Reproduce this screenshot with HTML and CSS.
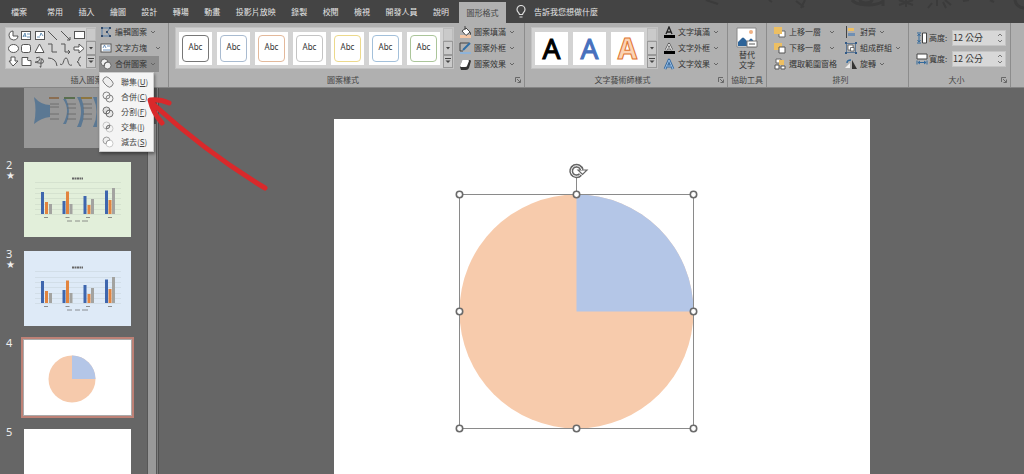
FILE: index.html
```html
<!DOCTYPE html>
<html lang="zh-Hant">
<head>
<meta charset="utf-8">
<title>圖形格式</title>
<link rel="stylesheet" href="styles.css">
</head>
<body>
<svg class="defs" aria-hidden="true">
  <symbol id="caret" viewBox="0 0 6 4"><path d="M1 1l2 2 2-2" fill="none" stroke="#666"/></symbol>
  <symbol id="more" viewBox="0 0 8 8"><path d="M1 1.500h6" stroke="#444" fill="none"/><path d="M1.500 3.500h5L4 6z" fill="#444"/></symbol>
  <symbol id="tri" viewBox="0 0 8 8"><path d="M2 3h4L4 5.500z" fill="#444"/></symbol>
  <symbol id="launch" viewBox="0 0 6 6"><path d="M.5 5V.5H5M2 2l3 3M5.500 2.500v3h-3" fill="none" stroke="#555" stroke-width=".8"/></symbol>
  <symbol id="chart" viewBox="0 0 107 75">
    <path d="M11 20.500h86M11 26.500h86M11 31.500h86M11 36.500h86M11 42.500h86M11 47.500h86M11 52.500h86" stroke="#8a9a94" stroke-opacity=".25" stroke-width=".6"/>
    <path d="M48 16.500h11" stroke="#666" stroke-width="1.800" stroke-dasharray="2 .5"/>
    <path d="M17 30h3v22h-3zM38.500 39h3v13h-3zM59.500 34h3v18h-3zM81 28.500h3v23.500h-3z" fill="#3e66ae"/>
    <path d="M21 40h3v12h-3zM42 29.500h3v22.500h-3zM63.500 43h3v9h-3zM84.500 38h3v14h-3z" fill="#e2843f"/>
    <path d="M25 42h3v10h-3zM45.500 42h3v10h-3zM67 37h3v15h-3zM88 26h3v26h-3z" fill="#a3a3a0"/>
    <path d="M20 55.500h4M41.500 55.500h4M62 55.500h4M84 55.500h4M43 59h5M51 59h5M58 59h6" stroke="#666" stroke-opacity=".7"/>
  </symbol>
</svg>

<header class="tabbar">
  <button class="tab file">檔案</button>
  <nav class="tabs">
    <button class="tab">常用</button><button class="tab">插入</button><button class="tab">繪圖</button><button class="tab">設計</button><button class="tab">轉場</button><button class="tab">動畫</button><button class="tab">投影片放映</button><button class="tab">錄製</button><button class="tab">校閱</button><button class="tab">檢視</button><button class="tab">開發人員</button><button class="tab">說明</button>
  </nav>
  <button class="tab active">圖形格式</button>
  <button class="tab tell">
    <svg class="bulb" viewBox="0 0 10 14"><path d="M3.500 9.500C3 7.500 1 7 1 4.500a4 4 0 0 1 8 0C9 7 7 7.500 6.500 9.500zM3.500 12h3" fill="none" stroke="#ddd" stroke-width="1.200"/></svg>
    告訴我您想做什麼
  </button>
  <svg class="doodles" viewBox="0 0 384 23" aria-hidden="true">
    <g fill="none" stroke="#3b3b3b" stroke-width="2">
      <path d="M66 0l12 4M129 0l3 2M156 1l8 6M165 0l-4 8M259 0l14 5M273 0l-14 5M266 0v7M288 8l4-5M297 6V0M306 8l-3-6M311 5l-6-5M323 1l6-1M350 0l4 2"/>
      <path d="M212 0a17 7 0 0 0 30 2M220 0a6 3 0 0 0 12 0M243 0v6M375 0a9 9 0 0 0 9 8" stroke-width="3"/>
    </g>
  </svg>
</header>

<div class="ribbon">
  <section class="group g-insert">
    <div class="body">
      <div class="gallery shapes">
        <svg class="shape-grid" viewBox="0 0 80 40" role="img" aria-label="圖案">
          <g fill="#fff" stroke="#555">
            <path d="M7 3a4.500 4.500 0 1 0 5 5H7z"/><rect x="15.500" y="3.500" width="9" height="8"/><rect x="29.500" y="3.500" width="9" height="8"/><rect x="68.500" y="3.500" width="10" height="7"/>
            <ellipse cx="7.500" cy="20.500" rx="5" ry="4"/><rect x="15.500" y="16.500" width="9" height="8" rx="2"/><path d="M33.500 16l4.500 8.500h-9zM68 19h5v-3l5 4.500-5 4.500v-3h-5zM5 29h4v4h3l-5 5-4-5h2zM16 37.500v-8h6q-2 4 3 3v5z"/>
          </g>
          <g fill="none" stroke="#555">
            <path d="M42 3l9 9M55 3l9 9m0-3v3h-3M42 16h4v8h5M55 16h4v8h5m-2-2l2 2-2 2M30 30q5-2 4 1t-4 3 3 1 4-3-2 3-1 3M42 30q8 0 9 8M54 36c4 3 3-6 6-6s1 9 6 7M75 29q-2 0-2 2t-2 3q2 0 2 2t2 2"/>
          </g>
          <path d="M17 9l2-4 1 4M17 8h3M21 6h3M21 9h3M31 9h3M34 8l1-3 2 3" stroke="#477aa5" fill="none" stroke-width=".8"/>
        </svg>
        <div class="scroller"><button aria-label="上"></button><button aria-label="下"><svg><use href="#tri"/></svg></button><button aria-label="更多"><svg><use href="#more"/></svg></button></div>
      </div>
      <div class="cmds">
        <button class="cmd"><svg class="ico" viewBox="0 0 12 12"><path d="M2 2h8L7 6l3 4H2z" fill="none" stroke="#577fa8"/><path d="M1 1h2v2H1zM9 1h2v2H9zM1 9h2v2H1zM9 9h2v2H9zM6 5h2v2H6z" fill="#344b6b"/></svg>編輯圖案<svg class="caret"><use href="#caret"/></svg></button>
        <button class="cmd wide"><svg class="ico" viewBox="0 0 12 12"><rect x="1" y="2" width="10" height="8" fill="#fff" stroke="#555"/><path d="M3 6l1.500-3L6 6M7 4h3M3 8h7" stroke="#4a77a8" fill="none" stroke-width=".8"/></svg>文字方塊<svg class="caret"><use href="#caret"/></svg></button>
        <div class="merge">
          <button class="cmd pressed" aria-expanded="true"><svg class="ico" viewBox="0 0 12 12"><g fill="#eee" stroke="#555" stroke-width=".8"><circle cx="4.500" cy="4.500" r="3.500"/><circle cx="7.500" cy="7.500" r="3.500"/><path d="M4.500 8a3.500 3.500 0 0 1 3.500-4" fill="none"/></g></svg>合併圖案<svg class="caret"><use href="#caret"/></svg></button>
          <div class="menu" role="menu">
            <button class="item" role="menuitem"><svg class="ico" viewBox="0 0 12 12"><path d="M2 7a3.500 3.500 0 1 1 5-5l3 3a3.500 3.500 0 1 1-5 5z" fill="#eee" stroke="#666" stroke-width=".8"/></svg><span>聯集(<u>U</u>)</span></button>
            <button class="item" role="menuitem"><svg class="ico" viewBox="0 0 12 12"><g fill="none" stroke="#666" stroke-width=".8"><circle cx="4.500" cy="4.500" r="3.500"/><circle cx="7.500" cy="7.500" r="3.500"/></g></svg><span>合併(<u>C</u>)</span></button>
            <button class="item" role="menuitem"><svg class="ico" viewBox="0 0 12 12"><g fill="#ddd" stroke="#555" stroke-width=".8"><circle cx="4.500" cy="4.500" r="3.500"/><circle cx="7.500" cy="7.500" r="3.500" fill-opacity=".5"/><path d="M4 8q0-4 4-4-0 4-4 4z" fill="#fff"/></g></svg><span>分割(<u>F</u>)</span></button>
            <button class="item" role="menuitem"><svg class="ico" viewBox="0 0 12 12"><g fill="none" stroke="#bbb" stroke-width=".8"><circle cx="4.500" cy="4.500" r="3.500"/><circle cx="7.500" cy="7.500" r="3.500"/></g><path d="M4 8q0-4 4-4 0 4-4 4z" fill="#ddd" stroke="#666" stroke-width=".8"/></svg><span>交集(<u>I</u>)</span></button>
            <button class="item" role="menuitem"><svg class="ico" viewBox="0 0 12 12"><circle cx="7.500" cy="7.500" r="3.500" fill="#fff" stroke="#bbb" stroke-width=".8"/><path d="M8 4a3.500 3.500 0 1 0-4 4q0-4 4-4z" fill="#eee" stroke="#888" stroke-width=".8"/></svg><span>減去(<u>S</u>)</span></button>
          </div>
        </div>
      </div>
    </div>
    <div class="caption"><span>插入圖案</span></div>
  </section>

  <section class="group g-style">
    <div class="body">
      <div class="gallery">
        <div class="cards">
          <button class="card"><span class="abc k">Abc</span></button><button class="card"><span class="abc b">Abc</span></button><button class="card"><span class="abc o">Abc</span></button><button class="card"><span class="abc g">Abc</span></button><button class="card"><span class="abc y">Abc</span></button><button class="card"><span class="abc c">Abc</span></button><button class="card"><span class="abc n">Abc</span></button>
        </div>
        <div class="scroller"><button aria-label="上"></button><button aria-label="下"><svg><use href="#tri"/></svg></button><button aria-label="更多"><svg><use href="#more"/></svg></button></div>
      </div>
      <div class="cmds">
        <button class="cmd"><svg class="ico" viewBox="0 0 12 12"><path d="M1 9h11v3H1z" fill="#f3c6a5"/><path d="M3 5l4-3 4 4-4 3.500z" fill="#fff" stroke="#444"/><path d="M6 4V0M11 6l1 3" stroke="#444"/></svg>圖案填滿<svg class="caret"><use href="#caret"/></svg></button>
        <button class="cmd"><svg class="ico" viewBox="0 0 12 12"><path d="M10 1H1v8h3" fill="none" stroke="#444"/><path d="M4 8l7-7" stroke="#2f6ea5" stroke-width="2"/><path d="M1 11h11" stroke="#8fb3d8" stroke-width="2"/></svg>圖案外框<svg class="caret"><use href="#caret"/></svg></button>
        <button class="cmd"><svg class="ico" viewBox="0 0 12 12"><path d="M1 9l2-6q1-1 2-1h5q2 0 2 1l-2 7q-1 2-3 2H2z" fill="#333"/><path d="M1 8l2-5q0-1 1-1h5q1 0 1 1L8 8q0 1-2 1H2z" fill="#fff"/></svg>圖案效果<svg class="caret"><use href="#caret"/></svg></button>
      </div>
    </div>
    <div class="caption"><span>圖案樣式</span><button class="launch" aria-label="設定圖案格式"><svg><use href="#launch"/></svg></button></div>
  </section>

  <section class="group g-art">
    <div class="body">
      <div class="gallery">
        <div class="cards">
          <button class="card wa wa-black">A</button><button class="card wa wa-blue">A</button><button class="card wa wa-orange">A</button>
        </div>
        <div class="scroller"><button aria-label="上"></button><button aria-label="下"><svg><use href="#tri"/></svg></button><button aria-label="更多"><svg><use href="#more"/></svg></button></div>
      </div>
      <div class="cmds">
        <button class="cmd"><svg class="ico" viewBox="0 0 12 12"><path d="M3 8l3-7 3 7M4 6h4" fill="none" stroke="#222" stroke-width="1.300"/><path d="M1 9h11v3H1z" fill="#000"/></svg>文字填滿<svg class="caret"><use href="#caret"/></svg></button>
        <button class="cmd"><svg class="ico" viewBox="0 0 12 12"><path d="M3 8l3-6 3 6M4 6h4" fill="none" stroke="#555" stroke-width="2.400" stroke-linejoin="round"/><path d="M3 8l3-6 3 6M4 6h4" fill="none" stroke="#eee"/><path d="M1 9h11v3H1z" fill="#000"/></svg>文字外框<svg class="caret"><use href="#caret"/></svg></button>
        <button class="cmd"><svg class="ico" viewBox="0 0 12 12"><path d="M2 11l4-9 4 9M4 8h4" fill="none" stroke="#35699f" stroke-width="2.800" stroke-linejoin="round"/><path d="M2 11l4-9 4 9M4 8h4" fill="none" stroke="#9cc1e6"/></svg>文字效果<svg class="caret"><use href="#caret"/></svg></button>
      </div>
    </div>
    <div class="caption"><span>文字藝術師樣式</span><button class="launch" aria-label="設定文字效果格式"><svg><use href="#launch"/></svg></button></div>
  </section>

  <section class="group g-alt">
    <div class="body">
      <button class="big"><svg class="pic" viewBox="0 0 22 22"><path d="M1 1h19v19H1z" fill="#fff" stroke="#888"/><path d="M2 19v-4l4-4q1-1 2 0l4 4 2-3q1-1 2 0l3 4v3z" fill="#2e6499"/><circle cx="15" cy="5" r="2" fill="#efb184"/><path d="M11 14h10v6H11z" fill="#fff" stroke="#777"/><path d="M13 17h6" stroke="#555"/></svg><span>替代<br>文字</span></button>
    </div>
    <div class="caption"><span>協助工具</span></div>
  </section>

  <section class="group g-arrange">
    <div class="body">
      <div class="cmds">
        <button class="cmd wide"><svg class="ico" viewBox="0 0 12 12"><path d="M5 5h6v6H5z" fill="#fff" stroke="#666"/><path d="M0 1h8v7H0z" fill="#edbf62"/></svg>上移一層<svg class="caret"><use href="#caret"/></svg></button>
        <button class="cmd wide"><svg class="ico" viewBox="0 0 12 12"><path d="M0 1h8v7H0z" fill="#edbf62"/><path d="M5 5h6v6H5z" fill="#fff" stroke="#555"/></svg>下移一層<svg class="caret"><use href="#caret"/></svg></button>
        <button class="cmd"><svg class="ico" viewBox="0 0 12 12"><path d="M2 1h5v4H2z" fill="#fff" stroke="#666"/><path d="M5 2h5v5H5z" fill="#edbf62"/><path d="M1 7h4v4H1zM7 8h4v3H7z" fill="#fff" stroke="#555"/></svg>選取範圍窗格</button>
      </div>
      <div class="cmds">
        <button class="cmd"><svg class="ico" viewBox="0 0 12 12"><path d="M1.500 0v12" stroke="#444"/><path d="M3 2h6v3H3z" fill="#edbf62"/><path d="M3 7h7v3H3z" fill="#6f8fb3"/></svg>對齊<svg class="caret"><use href="#caret"/></svg></button>
        <button class="cmd"><svg class="ico" viewBox="0 0 12 12"><path d="M1.500 1.500h9v9h-9z" fill="none" stroke="#5d7896"/><path d="M3 3h5v5H3z" fill="#fff" stroke="#555" stroke-width=".8"/><path d="M5.500 5.500H9V9H5.500z" fill="#fff" stroke="#555" stroke-width=".8"/><path d="M0 0h2v2H0zM10 0h2v2h-2zM0 10h2v2H0zM10 10h2v2h-2z" fill="#335a85"/></svg>組成群組<svg class="caret"><use href="#caret"/></svg></button>
        <button class="cmd"><svg class="ico" viewBox="0 0 12 12"><path d="M7 2v9h5z" fill="#333"/><path d="M5 10H0l5-5z" fill="#eee"/><path d="M2 5q0-3 4-3" fill="none" stroke="#336a9d" stroke-width="1.500"/></svg>旋轉<svg class="caret"><use href="#caret"/></svg></button>
      </div>
    </div>
    <div class="caption"><span>排列</span></div>
  </section>

  <section class="group g-size">
    <div class="body">
      <div class="fields">
        <div class="field"><svg class="ico" viewBox="0 0 12 12"><path d="M6.500 1h4v10h-4z" fill="#fff" stroke="#444"/><path d="M1 1h4M1 11h4M3 2v8M1.500 4L3 2l1.500 2M1.500 8L3 10l1.500-2" fill="none" stroke="#336a9d"/></svg><label for="h">高度:</label><span class="spin"><input id="h" type="text" value="12 公分"><svg viewBox="0 0 6 12"><path d="M1 4l2-2 2 2M1 8l2 2 2-2" fill="none" stroke="#777"/></svg></span></div>
        <div class="field"><svg class="ico" viewBox="0 0 12 12"><path d="M1 1h10v5H1z" fill="#fff" stroke="#444"/><path d="M1 7.500v4M11 7.500v4M2 9.500h8M4 8L2 9.500 4 11M8 8l2 1.500L8 11" fill="none" stroke="#336a9d"/></svg><label for="w">寬度:</label><span class="spin"><input id="w" type="text" value="12 公分"><svg viewBox="0 0 6 12"><path d="M1 4l2-2 2 2M1 8l2 2 2-2" fill="none" stroke="#777"/></svg></span></div>
      </div>
    </div>
    <div class="caption"><span>大小</span><button class="launch" aria-label="大小及位置"><svg><use href="#launch"/></svg></button></div>
  </section>
</div>

<main class="work">
  <aside class="rail">
    <ol class="slides">
      <li class="slide"><div class="num"></div><div class="thumb dim"><svg viewBox="0 0 107 75">
        <path d="M10 24q7 8 16 8v12q-9 1-16 7 3-14 0-27zM39 26q8 11 0 25h3q6-13 0-25zM53 24q8 14 0 30h4q6-15 0-30zM69 24q7 15 0 30h4V24z" fill="#5b7893"/>
        <path d="M25 25h10" stroke="#8b6e52" stroke-width="2"/><path d="M40 25h11" stroke="#596e4e" stroke-width="2"/><path d="M57 25h11" stroke="#8d7640" stroke-width="2"/>
        <path d="M26 31h9M26 34h9M26 41h9M26 46h9M43 31h9M43 35h9M43 41h9M43 46h9M59 31h9M59 35h9M59 41h9M59 46h9" stroke="#666" stroke-width=".8"/></svg></div></li>
      <li class="slide"><div class="num">2<span class="star">★</span></div><div class="thumb green"><svg viewBox="0 0 107 75"><use href="#chart"/></svg></div></li>
      <li class="slide"><div class="num">3<span class="star">★</span></div><div class="thumb blue"><svg viewBox="0 0 107 75"><use href="#chart"/></svg></div></li>
      <li class="slide"><div class="num">4</div><div class="thumb selected"><svg viewBox="0 0 107 75"><circle cx="48" cy="39" r="23.500" fill="#f6caac"/><path d="M48 39V15.500A23.500 23.500 0 0 1 71.500 39z" fill="#b4c6e7"/></svg></div></li>
      <li class="slide"><div class="num">5</div><div class="thumb"><svg viewBox="0 0 107 75"></svg></div></li>
    </ol>
    <div class="track"><div class="grip"></div></div>
  </aside>
  <section class="canvas">
    <svg class="page" viewBox="0 0 536 372" role="img" aria-label="圓餅">
      <circle cx="242.500" cy="192.500" r="117" fill="#f7cbac"/>
      <path d="M242.500 192.500v-117a117 117 0 0 1 117 117z" fill="#b4c6e7"/>
      <path d="M125.500 75.500h234v234h-234zM242.500 75.500V58" fill="none" stroke="#8a8a8a"/>
      <g fill="#fff" stroke="#6a6a6a" stroke-width="1.600">
        <circle cx="125.500" cy="75.500" r="3.200"/><circle cx="242.500" cy="75.500" r="3.200"/><circle cx="359.500" cy="75.500" r="3.200"/>
        <circle cx="125.500" cy="192.500" r="3.200"/><circle cx="359.500" cy="192.500" r="3.200"/>
        <circle cx="125.500" cy="309.500" r="3.200"/><circle cx="242.500" cy="309.500" r="3.200"/><circle cx="359.500" cy="309.500" r="3.200"/>
      </g>
      <path d="M246.500 55.500a5.300 5.300 0 1 1 1.200-4.500" fill="none" stroke="#666" stroke-width="4"/>
      <path d="M244 51h9l-4.500 4.500z" fill="#fff" stroke="#666" stroke-width="1.200"/>
      <path d="M246.500 55.500a5.300 5.300 0 1 1 1.200-4.500" fill="none" stroke="#fff" stroke-width="1"/>
    </svg>
  </section>
</main>

<svg class="arrow" viewBox="0 0 124 98" aria-hidden="true"><path d="M118 92Q60 57 6 8M22 7Q13 3 3 4q3 13 12 23" fill="none" stroke="#d9292b" stroke-width="5" stroke-linecap="round" stroke-linejoin="round"/></svg>
</body>
</html>
```
FILE: styles.css
```css
* { box-sizing: border-box; }
body {
  margin: 0;
  height: 100vh;
  display: flex;
  flex-direction: column;
  overflow: hidden;
  position: relative;
  background: #666;
  color: #333;
  font: 8px/10px "Noto Sans CJK TC", "Noto Sans", sans-serif;
}
button, input { font: inherit; color: inherit; border: 0; padding: 0; margin: 0; background: none; }
button { white-space: nowrap; }
svg { display: block; flex: none; }
.defs { position: absolute; width: 0; height: 0; }

.tabbar { display: flex; height: 23px; flex: none; background: #444; color: #e6e6e6; padding-left: 11px; }
.tab { flex: none; }
.tabs { display: flex; justify-content: space-between; width: 402px; margin: 0 10px 0 20px; }
.active { background: #b0b0b0; color: #444; width: 47px; margin-top: 2px; }
.tell { display: flex; align-items: center; gap: 8px; padding-left: 10px; }
.bulb { width: 10px; height: 14px; }
.doodles { width: 384px; height: 23px; margin-left: auto; }

.ribbon { display: flex; flex: none; background: #b0b0b0; border-bottom: 1px solid #858585; }
.group { display: flex; flex-direction: column; padding-top: 1px; border-right: 1px solid #8c8c8c; }
.body { display: flex; height: 48px; align-items: center; }
.caption { display: flex; align-items: center; height: 15px; color: #444; }
.caption span { flex: 1; text-align: center; white-space: nowrap; }
.launch { width: 13px; display: flex; justify-content: center; }
.launch svg { width: 6px; height: 6px; }
.g-insert { width: 169px; padding-left: 5px; }
.g-style { width: 356px; padding-left: 6px; }
.g-art { width: 203px; padding-left: 6px; }
.g-alt { width: 39px; }
.g-arrange { width: 142px; padding-left: 6px; }
.g-size { width: 102px; padding-left: 7px; }

.gallery { display: flex; height: 42px; background: #d3d3d3; border: 1px solid #c2c2c2; }
.shapes { width: 91px; }
.shape-grid { width: 80px; height: 40px; }
.cards { display: flex; align-items: center; gap: 5px; padding: 0 3px; }
.card { width: 33px; height: 33px; background: #fff; display: flex; align-items: center; justify-content: center; }
.abc { width: 27px; height: 27px; border: 1px solid; border-radius: 4px; line-height: 22px; font-family: "Noto Sans", sans-serif; }
.k { border-color: #777; }
.b { border-color: #a9bbd0; }
.o { border-color: #e3b99b; }
.g { border-color: #c4c4c4; }
.y { border-color: #ecd98c; }
.c { border-color: #a3c0da; }
.n { border-color: #abc59a; }
.wa { font: 28px/33px "Noto Sans", sans-serif; }
.wa-black { color: #000; -webkit-text-stroke: 1px #000; }
.wa-blue { color: #4770bd; -webkit-text-stroke: 1px #4770bd; }
.wa-orange { color: #fbd3b4; font-weight: 700; -webkit-text-stroke: 1px #df7430; }
.scroller { display: flex; flex-direction: column; width: 10px; margin-left: auto; }
.scroller button { flex: 1; border: 1px solid #999; background: #cacaca; display: flex; align-items: center; justify-content: center; }
.scroller button:first-child { border-color: #bbb; }
.scroller svg { width: 8px; height: 8px; }

.cmds { display: flex; flex-direction: column; margin-left: 3px; }
.cmd { height: 16px; display: flex; align-items: center; gap: 3px; padding: 0 2px 0 1px; }
.ico { width: 12px; height: 12px; }
.caret { width: 6px; height: 4px; }
.wide .caret { margin-left: 5px; }
.pressed { background: #8d8d8d; width: 60px; }
.merge { position: relative; }
.menu { position: absolute; z-index: 2; top: 16px; left: 0; width: 55px; padding: 1px 0 2px; background: #f4f4f4; border: 1px solid #ccc; box-shadow: 1px 2px 3px rgba(0, 0, 0, .4); }
.item { display: flex; align-items: center; gap: 7px; width: 100%; height: 15px; padding-left: 2px; color: #444; }

.g-style .cmds { margin-left: 4px; }
.g-art .cmds { margin-left: 4px; }
.g-arrange .cmds { margin-left: 0; }
.g-arrange .cmds + .cmds { margin-left: 5px; }
.big { width: 100%; display: flex; flex-direction: column; align-items: center; gap: 1px; }
.pic { width: 22px; height: 22px; }
.fields { display: flex; flex-direction: column; gap: 5px; }
.field { display: flex; align-items: center; gap: 1px; }
.field label { width: 22px; }
.spin { display: flex; align-items: center; width: 54px; height: 16px; background: #d8d8d8; border: 1px solid #c4c4c4; }
.spin input { flex: 1; min-width: 0; height: 14px; font-size: 9px; }
.spin svg { width: 6px; height: 12px; margin-right: 2px; }

.work { flex: 1; min-height: 0; display: flex; }
.rail { flex: none; display: flex; width: 158px; overflow: hidden; border-right: 1px solid #7c7c7c; }
.slides { flex: 1; list-style: none; margin: -15px 0 0; padding: 0; display: flex; flex-direction: column; gap: 14px; }
.slide { display: flex; flex: none; }
.num { width: 24px; padding-left: 6px; color: #eee; font: 11px/6px "Noto Sans", sans-serif; }
.star { display: block; margin-top: 3px; font: 10px/9px "DejaVu Sans", sans-serif; }
.thumb { width: 107px; height: 75px; background: #fff; }
.thumb svg { width: 107px; height: 75px; }
.dim { background: #979797; }
.green { background: #e2efda; }
.blue { background: #deeaf7; }
.selected { outline: 2px solid #bd8176; outline-offset: 1px; box-shadow: 0 0 0 1px #aaa; }
.track { width: 10px; background: #575757; padding: 36px 1px 0; }
.grip { height: 100%; background: #999; }
.canvas { flex: 1; min-width: 0; overflow: hidden; padding: 31px 0 0 20px; border-left: 1px solid #505050; display: flex; justify-content: center; align-items: flex-start; }
.page { width: 62%; min-width: 536px; background: #fff; }

.arrow { position: absolute; left: 147px; top: 96px; width: 124px; height: 98px; z-index: 3; }
```
